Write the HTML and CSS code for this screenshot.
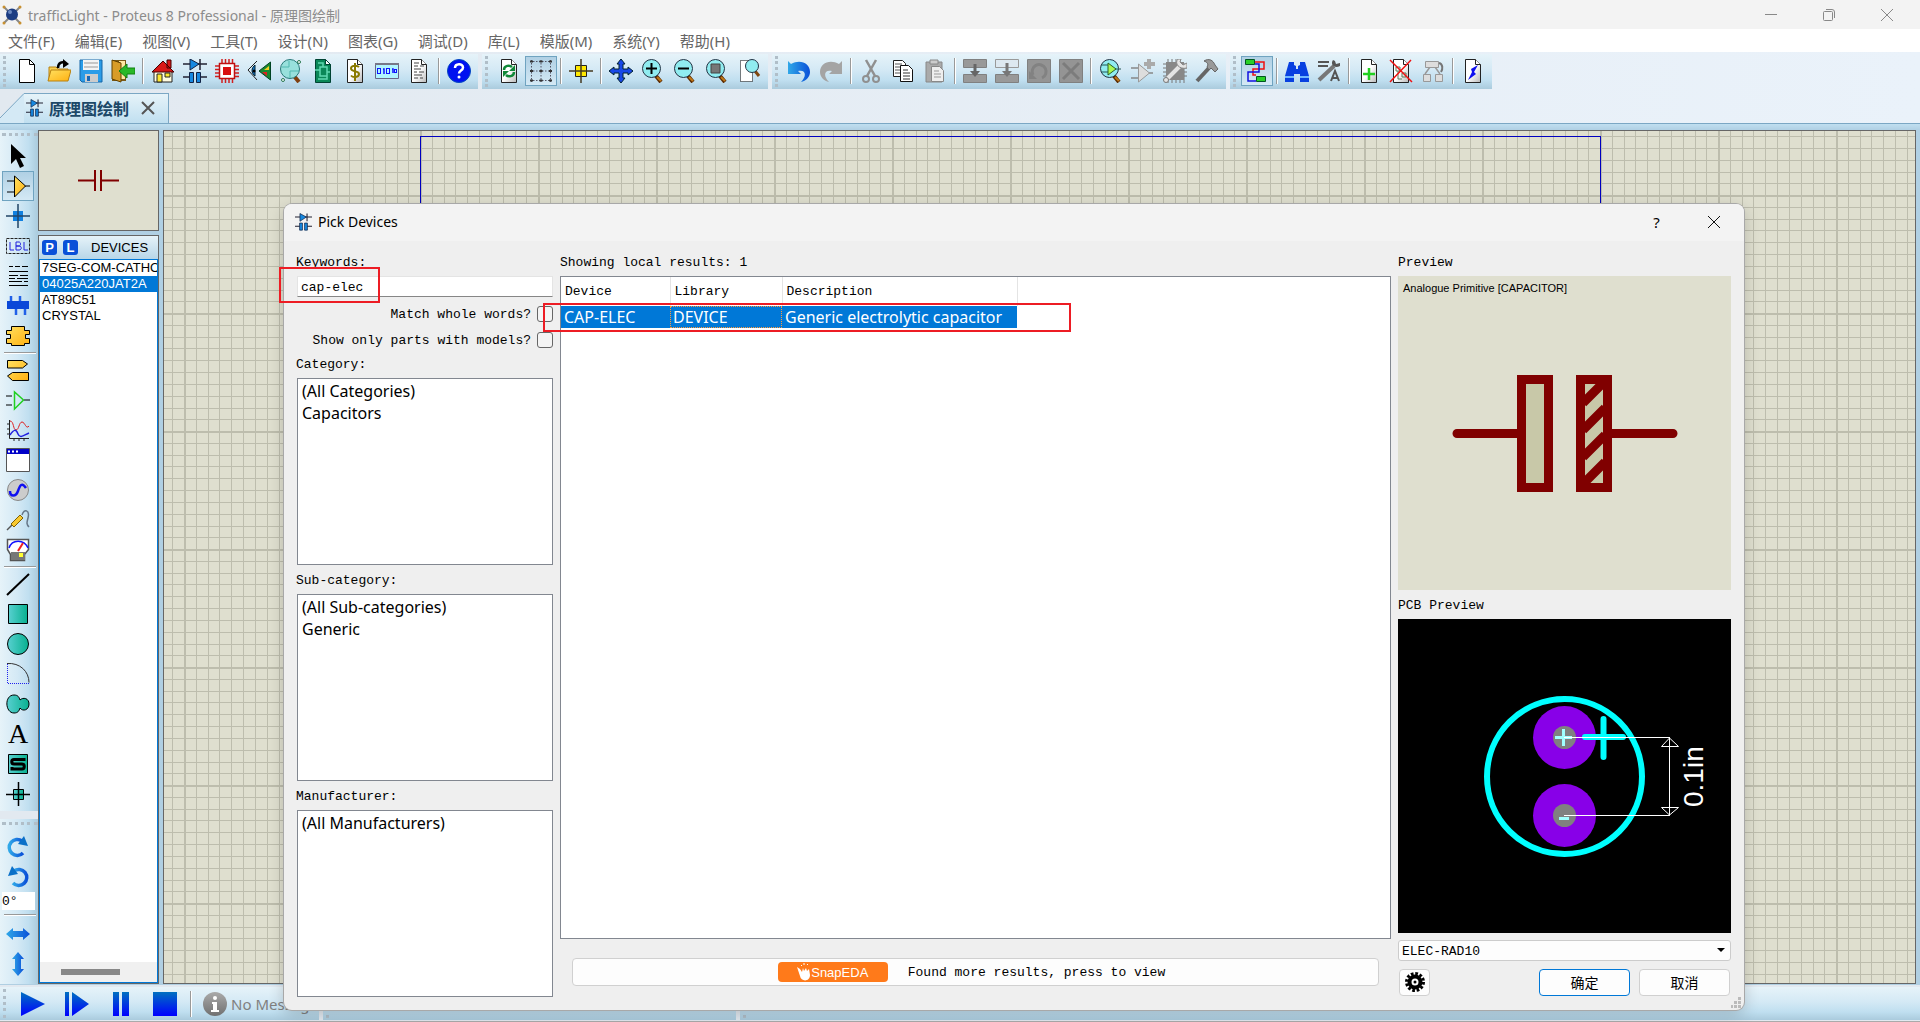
FILE: index.html
```html
<!DOCTYPE html>
<html lang="zh-CN">

<head>
    <meta charset="UTF-8">
    <meta name="viewport" content="width=device-width, initial-scale=1.0">
    <title>trafficLight - Proteus 8 Professional - 原理图绘制</title>
    <link rel="stylesheet" href="styles.css">
</head>

<body>

    <!-- Shared gradients and symbols -->
    <svg class="defs" width="0" height="0" aria-hidden="true">
        <defs>
            <linearGradient id="gPage" x1="0" y1="0" x2="1" y2="1"><stop offset="0.5" stop-color="#fff"/><stop offset="1" stop-color="#b8b8b8"/></linearGradient>
            <linearGradient id="gBlue" x1="0" y1="0" x2="0" y2="1"><stop offset="0" stop-color="#0070c0"/><stop offset="1" stop-color="#0000ff"/></linearGradient>
            <linearGradient id="gArrow" x1="0" y1="0" x2="1" y2="0"><stop offset="0" stop-color="#30a8e8"/><stop offset="1" stop-color="#0a50d8"/></linearGradient>
            <linearGradient id="gTeal" x1="0" y1="0" x2="1" y2="0"><stop offset="0" stop-color="#58d0d0"/><stop offset="1" stop-color="#08b090"/></linearGradient>
            <linearGradient id="gGold" x1="0" y1="0" x2="1" y2="1"><stop offset="0" stop-color="#ffe060"/><stop offset="1" stop-color="#ffb010"/></linearGradient>
            <linearGradient id="gGray" x1="0" y1="0" x2="0" y2="1"><stop offset="0" stop-color="#aaa"/><stop offset="1" stop-color="#707070"/></linearGradient>
            <symbol id="page" viewBox="0 0 24 24"><path d="M4.500.5h10l5 5v18h-15z" fill="url(#gPage)" stroke="#222"/><path d="M14.500.5v5h5" fill="#fff" stroke="#222"/></symbol>
            <symbol id="lens" viewBox="0 0 24 24"><path d="M15 17l5 6" stroke="#5a2a00" stroke-width="4"/><path d="M16 18l4 4" stroke="#c07818" stroke-width="2"/><circle cx="10.500" cy="9.500" r="9" fill="#90ecf0" stroke="#234"/></symbol>
            <symbol id="schematic" viewBox="0 0 24 24"><path d="M0 5h24M17 0v11" stroke="#223" stroke-width="1.500"/><path d="M7 0v11l9-6z" fill="#1688e0" stroke="#124"/><path d="M0 18h7M16 18h8" stroke="#223" stroke-width="1.500"/><path d="M6.500 13.500h4v10h-4zM13.500 13.500h4v10h-4z" fill="#1688e0" stroke="#124"/></symbol>
        </defs>
    </svg>

    <header class="titlebar">
        <svg class="app-logo" viewBox="0 0 20 20"><path d="M2 2l16 16M18 2L2 18" stroke="#888" stroke-width="2"/><circle cx="10" cy="9.500" r="6" fill="#1b3c82"/><circle cx="8" cy="7" r="2" fill="#6a88c0"/><circle cx="2" cy="2" r="1.500" fill="#c89030"/><circle cx="18" cy="2" r="1.500" fill="#c89030"/><circle cx="2" cy="18" r="1.500" fill="#c89030"/><circle cx="18" cy="18" r="1.500" fill="#c89030"/></svg>
        <span class="app-title">trafficLight - Proteus 8 Professional - 原理图绘制</span>
        <div class="window-buttons">
            <button aria-label="Minimize"><svg viewBox="0 0 12 12"><path d="M0 5.500h12"/></svg></button>
            <button aria-label="Restore"><svg viewBox="0 0 12 12"><rect x=".5" y="2.500" width="9" height="9" rx="1"/><path d="M3 .5h6a2.500 2.500 0 0 1 2.500 2.500v6"/></svg></button>
            <button aria-label="Close"><svg viewBox="0 0 12 12"><path d="M0 0l12 12M12 0L0 12"/></svg></button>
        </div>
    </header>

    <nav class="menubar">
        <button>文件(F)</button>
        <button>编辑(E)</button>
        <button>视图(V)</button>
        <button>工具(T)</button>
        <button>设计(N)</button>
        <button>图表(G)</button>
        <button>调试(D)</button>
        <button>库(L)</button>
        <button>模版(M)</button>
        <button>系统(Y)</button>
        <button>帮助(H)</button>
    </nav>

    <div class="toolbars">
        <div class="toolbar">
            <button title="New"><svg viewBox="0 0 24 24"><path d="M4.500.5h10l5 5v18h-15z" fill="#fff" stroke="#000"/><path d="M14.500.5v5h5" fill="none" stroke="#000"/></svg></button>
            <button title="Open"><svg viewBox="0 0 24 24"><path d="M2 22V8h7l2 2h10v3" fill="#f8d050" stroke="#b88010"/><path d="M1 22l3-11h20l-3 11z" fill="url(#gGold)" stroke="#b88010"/><path d="M11 9c0-5 4-7 7-5" fill="none" stroke="#000" stroke-width="2.500"/><path d="M16 0l6 5-6 4z"/></svg></button>
            <button title="Save"><svg viewBox="0 0 24 24"><path d="M1 1h22v22H3l-2-2z" fill="#2a9ce8" stroke="#1566a8"/><path d="M4 1h16v10H4z" fill="#f4f4f4"/><path d="M5 4h14M5 8h14" stroke="#999"/><path d="M6 15h13v8H6z" fill="#ccc"/><path d="M8 17h3v5H8z" fill="#1668b8"/></svg></button>
            <button title="Exit"><svg viewBox="0 0 24 24"><path d="M1 1h14v21H1z" fill="#7a5a18"/><path d="M8 2h6v18H8z" fill="#ffe8a0"/><path d="M1 1l9 3v19l-9-3z" fill="#d89c28" stroke="#604000"/><path d="M8 12l8-7v4h8v6h-8v4z" fill="#28b828" stroke="#108010"/></svg></button>
            <span class="sep"></span>
            <button title="Home"><svg viewBox="0 0 24 24"><path d="M3 12h18v11H3z" fill="#fffbe0" stroke="#222"/><path d="M16 1h4v8h-4zM1 13L12 2l11 11z" fill="#d81818" stroke="#400"/><path d="M6 15h5v8H6z" fill="#ffe830" stroke="#222"/><path d="M14 14h5v4h-5z" fill="#ffe830" stroke="#222"/></svg></button>
            <button title="Schematic Capture"><svg><use href="#schematic"/></svg></button>
            <button title="PCB Layout"><svg viewBox="0 0 24 24"><path d="M7 0v24M10.500 0v24M14 0v24M17.500 0v24M0 7h24M0 10.500h24M0 14h24M0 17.500h24" stroke="#d02020" stroke-width="1.500"/><path d="M4.500 4.500h15v15h-15z" fill="#fff" stroke="#c01010" stroke-width="1.500"/><path d="M8 8h8v8H8z" fill="#d81010"/></svg></button>
            <button title="3D Visualizer"><svg viewBox="0 0 24 24"><path d="M10 2L1 11l9 10" fill="none" stroke="#222"/><path d="M8 6c-4 3-4 8 0 11z" fill="#1878c8" stroke="#023"/><circle cx="7" cy="12" r="1.500"/><path d="M23.500 3v18L12 12z" fill="#188830" stroke="#042"/><path d="M22 7v4h-5z" fill="#f0d020"/><path d="M15 13l5 4v-4z" fill="#e02020"/></svg></button>
            <button title="Gerber Viewer"><svg viewBox="0 0 24 24"><path d="M15 17l5 6" stroke="#804010" stroke-width="4"/><circle cx="11" cy="10" r="9.500" fill="#98e0dc" stroke="#287878"/><path d="M3 8h7V2M11 19v-7h9" fill="none" stroke="#50b8b0"/><circle cx="20" cy="3" r="1.500" fill="#fff" stroke="#287850"/><circle cx="4" cy="21" r="1.500" fill="#fff" stroke="#287850"/></svg></button>
            <button title="Design Explorer"><svg viewBox="0 0 24 24"><path d="M4.500.5h10l5 5v18h-15z" fill="#0a8858" stroke="#043"/><path d="M14.500.5v5h5z" fill="#fff" stroke="#043"/><path d="M9 8h7v9H9zM7 4h5v4M7 20h9v-3M4 11h5M16 13h3" fill="none" stroke="#60d8b0" stroke-width="1.500"/></svg></button>
            <button title="Bill of Materials"><svg viewBox="0 0 24 24"><use href="#page"/><path d="M16 8c-2-2-8-2-8 1.500s8 2 8 5.500-6 4-8 1.500M12 4v18" fill="none" stroke="#8a7a00" stroke-width="2"/></svg></button>
            <button title="Source Code"><svg viewBox="0 0 24 24"><path d="M.5 4.500h23v15H.5z" fill="#b0f4ff" stroke="#668"/><path d="M0 5h24" stroke="#778" stroke-width="2"/><rect x="2.500" y="9.500" width="3" height="5" fill="none" stroke="#11f"/><path d="M8 10h1v5M17 10h1v4" fill="none" stroke="#11f" stroke-width="1.500"/><rect x="11.500" y="9.500" width="3" height="5" fill="none" stroke="#11f"/><rect x="19.500" y="10.500" width="2" height="3" fill="none" stroke="#11f"/></svg></button>
            <button title="Project Notes"><svg viewBox="0 0 24 24"><use href="#page"/><path d="M7 4h5M7 7h4M13 7h4M7 10h7M7 13h3M12 13h5M7 16h8M7 19h4M13 19h3" stroke="#444"/></svg></button>
            <span class="sep"></span>
            <button title="Help"><svg viewBox="0 0 24 24"><circle cx="12" cy="12" r="11.500" fill="#0010f0" stroke="#0048c0"/><path d="M8 9c0-5 8-5 8-.5 0 3-4 3-4 6" fill="none" stroke="#fff" stroke-width="2.500"/><circle cx="12" cy="18" r="1.500" fill="#fff"/></svg></button>
        </div>

        <div class="toolbar">
            <button title="Redraw"><svg viewBox="0 0 24 24"><use href="#page"/><path d="M7 11c0-5 6-5 8-3M17 13c0 5-6 5-8 3" fill="none" stroke="#108838" stroke-width="2.500"/><path d="M18 6v6h-6zM6 18v-6h6z" fill="#108838"/></svg></button>
            <button title="Toggle Grid" class="checked"><svg viewBox="0 0 24 24"><path d="M2.500 1v22M12 1v22M21.500 1v22M1 2.500h22M1 12h22M1 21.500h22" stroke="#556" stroke-dasharray="1.500 1.500"/><path d="M1 2.500h3M10.500 2.500h3M20 2.500h3M1 12h3M10.500 12h3M20 12h3M1 21.500h3M10.500 21.500h3M20 21.500h3" stroke="#333" stroke-width="2"/></svg></button>
            <span class="sep"></span>
            <button title="Origin"><svg viewBox="0 0 24 24"><path d="M6.500 6.500h11v11h-11z" fill="#ffe800" stroke="#222"/><path d="M12 0v24M0 12h24" stroke="#443a20" stroke-width="1.500"/></svg></button>
            <span class="sep"></span>
            <button title="Pan"><svg viewBox="0 0 24 24"><path d="M12 0l4 5h-2v5h5V8l5 4-5 4v-2h-5v5h2l-4 5-4-5h2v-5H5v2l-5-4 5-4v2h5V5H8z" fill="#1848e8" stroke="#023"/></svg></button>
            <button title="Zoom In"><svg viewBox="0 0 24 24"><use href="#lens"/><path d="M5 9.500h11M10.500 4v11" stroke="#000" stroke-width="2"/></svg></button>
            <button title="Zoom Out"><svg viewBox="0 0 24 24"><use href="#lens"/><path d="M5 9.500h11" stroke="#000" stroke-width="2"/></svg></button>
            <button title="Zoom All"><svg viewBox="0 0 24 24"><use href="#lens"/><path d="M6 5h9v9H6z" fill="#777" stroke="#444"/></svg></button>
            <button title="Zoom Area"><svg viewBox="0 0 24 24"><path d="M3.500 1.500h12v21h-12z" fill="#fff" stroke="#000" stroke-dasharray="1 1"/><path d="M18 12l4 5" stroke="#804810" stroke-width="3"/><circle cx="15" cy="7" r="6.500" fill="#90ecf0" stroke="#234"/></svg></button>
        </div>

        <div class="toolbar">
            <button title="Undo"><svg viewBox="0 0 24 24"><path d="M1 2l3 3c9-5 19-1 19 8 0 5-4 9-9 10 6-6 5-13-3-11l3 3H1z" fill="url(#gArrow)"/></svg></button>
            <button title="Redo"><svg viewBox="0 0 24 24"><path d="M23 2l-3 3C11 0 1 4 1 13c0 5 4 9 9 10-6-6-5-13 3-11l-3 3h13z" fill="#a4a4a4"/></svg></button>
            <span class="sep"></span>
            <button title="Cut"><svg viewBox="0 0 24 24"><path d="M7 1l9 16M17 1L8 17" stroke="#909090" stroke-width="2.500"/><circle cx="7" cy="20" r="3" fill="none" stroke="#909090" stroke-width="2"/><circle cx="17" cy="20" r="3" fill="none" stroke="#909090" stroke-width="2"/></svg></button>
            <button title="Copy"><svg viewBox="0 0 24 24"><path d="M2.500 1.500h9l3 3v13h-12z" fill="#fff" stroke="#222"/><path d="M4 5h7M4 8h7M4 11h7M4 14h7" stroke="#555"/><path d="M9.500 6.500h8l4 4v12h-12z" fill="#fff" stroke="#111"/><path d="M12 11h5M12 14h7M12 17h7M12 20h7" stroke="#333"/></svg></button>
            <button title="Paste"><svg viewBox="0 0 24 24"><path d="M3 3h16v20H3z" fill="#aaa" stroke="#888"/><path d="M7 1h8v4H7z" fill="#ccc" stroke="#888"/><path d="M8.500 7.500h8l4 4v11h-12z" fill="#eee" stroke="#888"/><path d="M11 12h5M11 15h7M11 18h7" stroke="#999"/></svg></button>
            <span class="sep"></span>
            <button title="Block Copy"><svg viewBox="0 0 24 24"><path d="M.5.500h23v8H.5zM.5 15.500h23v8H.5z" fill="#999" stroke="#808080"/><path d="M12 5v9" stroke="#666" stroke-width="3"/><path d="M7 12h10l-5 6z" fill="#666"/></svg></button>
            <button title="Block Move"><svg viewBox="0 0 24 24"><path d="M.5.500h23v8H.5z" fill="#dde8f0" stroke="#999"/><path d="M.5 15.500h23v8H.5z" fill="#999" stroke="#808080"/><path d="M12 4v10" stroke="#777" stroke-width="3"/><path d="M7 12h10l-5 6z" fill="#777"/></svg></button>
            <button title="Block Rotate"><svg viewBox="0 0 24 24"><path d="M.5.500h23v23H.5z" fill="#949494" stroke="#808080"/><path d="M6 16a7 7 0 1 1 9 3" fill="none" stroke="#828282" stroke-width="3"/><path d="M2 12v8h8z" fill="#828282"/></svg></button>
            <button title="Block Delete"><svg viewBox="0 0 24 24"><path d="M.5.500h23v23H.5z" fill="#949494" stroke="#808080"/><path d="M4 4l16 16M20 4L4 20" stroke="#7c7c7c" stroke-width="3"/></svg></button>
            <span class="sep"></span>
            <button title="Pick Parts"><svg viewBox="0 0 24 24"><use href="#lens"/><path d="M2 6h7M2 13h7M16 10h6" stroke="#255"/><path d="M9 4v12l8-6z" fill="#a8f850" stroke="#286028"/></svg></button>
            <button title="Make Device"><svg viewBox="0 0 24 24"><path d="M0 9h8M0 19h8M17 14h5" stroke="#888" stroke-width="1.500"/><path d="M7.500 5v18l11-9z" fill="#ddd" stroke="#999"/><path d="M18 0v10M13 5h11" stroke="#aaa" stroke-width="4"/></svg></button>
            <button title="Packaging Tool"><svg viewBox="0 0 24 24"><path d="M5 0v24M9 0v24M13 0v24M17 0v24M21 8v16M0 5h24M0 9h24M0 13h24M0 17h24" stroke="#777"/><path d="M3 3h18v18H3z" fill="#888"/><path d="M3 21L17 7" stroke="#e4e4e4" stroke-width="4"/><circle cx="3" cy="21" r="2.500" fill="#e4e4e4" stroke="#777"/><path d="M15 0c-4 4 1 11 9 9V4l-4 2-3-3 1-3z" fill="#e4e4e4" stroke="#888"/></svg></button>
            <button title="Decompose"><svg viewBox="0 0 24 24"><path d="M2 22L14 9" stroke="#666" stroke-width="4"/><path d="M9 2c5-3 9-1 11 4l3 4-3 3-4-4-2 2-2-3c2-3 0-5-3-6z" fill="#999" stroke="#666"/></svg></button>
        </div>

        <div class="toolbar">
            <button title="Wire Autorouter" class="checked"><svg viewBox="0 0 24 24"><path d="M10 3h9v7H8v6h3" fill="none" stroke="#f01010" stroke-width="1.500"/><path d="M10 5h4v8H3v9h8" fill="none" stroke="#1010e0" stroke-width="1.500"/><path d="M.5.500h9v5H.5zM11.500 17.500h9v5h-9z" fill="#28d028" stroke="#052"/></svg></button>
            <span class="sep"></span>
            <button title="Search"><svg viewBox="0 0 24 24"><path d="M4 3h5v3l2 1v3h2V7l2-1V3h5l4 14v6h-9v-8h-6v8H0v-6z" fill="#0840e0"/><path d="M0 18h9M15 18h9" stroke="#70b8ff" stroke-width="2"/></svg></button>
            <button title="Property Assignment"><svg viewBox="0 0 24 24"><path d="M1 3h11M1 7h10" stroke="#555" stroke-width="2"/><path d="M2 21L17 7" stroke="#777" stroke-width="4"/><path d="M16 1c-3 4 1 9 7 6V4l-4 1-1-3z" fill="#555"/><path d="M14 22l4-10 4 10M15 19h6" fill="none" stroke="#555" stroke-width="2"/></svg></button>
            <span class="sep"></span>
            <button title="New Sheet"><svg viewBox="0 0 24 24"><use href="#page"/><path d="M6 15h12M12 9v12" stroke="#20d020" stroke-width="2.500"/></svg></button>
            <button title="Remove Sheet"><svg viewBox="0 0 24 24"><use href="#page"/><path d="M7 8h4v4H7zM13 14h4v4h-4zM9 12v8h4" fill="none" stroke="#5a7a5a"/><path d="M1 1l22 22M22 1L1 23" stroke="#f01010" stroke-width="1.500"/></svg></button>
            <button title="Exit to Parent"><svg viewBox="0 0 24 24"><path d="M9 8l-5 7M14 8l5 7" stroke="#999" stroke-width="1.500"/><path d="M4.500 2.500h13v6h-13zM2.500 15.500h7v7h-7zM14.500 15.500h7v7h-7z" fill="#ddd" stroke="#999"/><path d="M18 4c4 1 4 6 2 9" fill="none" stroke="#777" stroke-width="2"/></svg></button>
            <span class="sep"></span>
            <button title="Electrical Rules Check"><svg viewBox="0 0 24 24"><use href="#page"/><path d="M17 6l-7 4 1 3-4 8 8-6-2-2z" fill="#1010f0"/></svg></button>
        </div>
    </div>

    <div class="tabbar">
        <svg class="tab-slope" viewBox="0 0 24 30" aria-hidden="true"><path d="M0 26L24 0v30H0z" fill="#d4e9f5"/><path d="M0 25L24 .5" stroke="#7ba7c4" fill="none"/></svg>
        <div class="tab">
            <svg class="small-icon"><use href="#schematic"/></svg>
            <span>原理图绘制</span>
            <button aria-label="Close tab"><svg viewBox="0 0 14 14"><path d="M1 1l12 12M13 1L1 13" stroke="#555" stroke-width="2"/></svg></button>
        </div>
    </div>

    <main class="workspace">
        <aside class="palettes">
            <div class="palette">
                <button title="Selection"><svg viewBox="0 0 24 24"><path d="M5 0v20l5-5 4 9 4-2-4-8h6z"/></svg></button>
                <button title="Component" class="checked"><svg viewBox="0 0 24 24"><path d="M1 7h8M1 18h8M18 12h6" stroke="#000"/><path d="M8.500 2v21l11-11z" fill="url(#gGold)" stroke="#000"/></svg></button>
                <button title="Junction"><svg viewBox="0 0 24 24"><path d="M7 7h10v10H7z" fill="#1080e0"/><path d="M12 0v24M0 12h24" stroke="#246" stroke-width="1.500"/></svg></button>
                <button title="Wire Label"><svg viewBox="0 0 24 24"><path d="M.5 4.500h23v15H.5z" fill="none" stroke="#222" stroke-dasharray="3 1"/><path d="M4 8v8h4M10 8v8h3c3 0 3-4 0-4h-3 3c2 0 2-4 0-4zM18 8v8h4" fill="none" stroke="#22d"/></svg></button>
                <button title="Text Script"><svg viewBox="0 0 24 24"><path d="M3 2.500h4M9 2.500h5M16 2.500h6M3 7.500h19M3 11.500h9M14 11.500h8M3 14.500h6M11 14.500h11M3 17.500h13M18 17.500h4M3 21.500h19" stroke="#000"/></svg></button>
                <button title="Buses"><svg viewBox="0 0 24 24"><path d="M5 2v8M14 2v8M10 14v7M19 14v7" stroke="#2060e8" stroke-width="2.500"/><path d="M1 7h22v8H1z" fill="#0a48d8"/></svg></button>
                <button title="Subcircuit"><svg viewBox="0 0 24 24"><path d="M5.500 2.500h13v4h5v4h-4v4h4v5h-5v2h-13v-2h-5v-5h4v-4h-4v-4h5z" fill="url(#gGold)" stroke="#000"/></svg></button>
                <span class="line"></span>
                <button title="Terminals"><svg viewBox="0 0 24 24"><path d="M1.500 2.500h15l5 3.500-5 4h-15zM22.500 14.500h-16L1.500 18l5 4.500h16z" fill="url(#gGold)" stroke="#000"/></svg></button>
                <button title="Device Pins"><svg viewBox="0 0 24 24"><path d="M0 8h6M0 17h6M18 12h6" stroke="#000"/><path d="M8.500 4v17l9-9z" fill="none" stroke="#20d020" stroke-width="1.500"/></svg></button>
                <button title="Graph"><svg viewBox="0 0 24 24"><path d="M3.500 2v18.500H23M1 6h3M1 11h3M1 16h3M8 20v3M13 20v3M18 20v3" fill="none" stroke="#222"/><path d="M4 3c4 0 3 9 6 9s3-8 6-8 4 8 7 4" fill="none" stroke="#e02020"/><path d="M4 17c4-6 6-6 8-1s6 1 11-1" fill="none" stroke="#2020e0" stroke-width="1.500"/></svg></button>
                <button title="Active Popup"><svg viewBox="0 0 24 24"><path d="M.5.500h23v23H.5z" fill="#fff" stroke="#555"/><path d="M1 1h22v5H1z" fill="#0000c8"/><path d="M2 3.500h2M6 3.500h2M10 3.500h2" stroke="#fff" stroke-width="2"/></svg></button>
                <button title="Generator"><svg viewBox="0 0 24 24"><circle cx="12" cy="12" r="10.500" fill="#ccc" stroke="#888"/><path d="M4 13c0 6 6 6 8 0s4-9 8-3" fill="none" stroke="#1010f0" stroke-width="2.500"/></svg></button>
                <button title="Probe"><svg viewBox="0 0 24 24"><path d="M1 22l6-6" stroke="#555" stroke-width="1.500"/><path d="M5 16L14 7l3 3-9 9z" fill="#f8c830" stroke="#806000"/><path d="M16 7c2-7 8-5 6 3-1 4-2 6 1 9" fill="none" stroke="#678" stroke-width="1.500"/></svg></button>
                <button title="Instruments"><svg viewBox="0 0 24 24"><path d="M1.500 1.500h21v10l-4 5v6h-14v-6l-3-5z" fill="#fff" stroke="#555" stroke-width="1.500"/><path d="M3 10c3-9 15-9 19 0" fill="none" stroke="#11f" stroke-width="1.500"/><path d="M12 13l5-8" stroke="#f02020" stroke-width="2"/><path d="M5 14h14v8H5z" fill="#777"/><path d="M13 15h4v4h-4z" fill="#ff3"/></svg></button>
                <span class="line"></span>
                <button title="2D Line"><svg viewBox="0 0 24 24"><path d="M1 23L23 2" stroke="#000" stroke-width="2"/></svg></button>
                <button title="2D Box"><svg viewBox="0 0 24 24"><path d="M2.500 2.500h19v19h-19z" fill="url(#gTeal)" stroke="#000"/></svg></button>
                <button title="2D Circle"><svg viewBox="0 0 24 24"><circle cx="12" cy="12" r="10.500" fill="url(#gTeal)" stroke="#000"/></svg></button>
                <button title="2D Arc"><svg viewBox="0 0 24 24"><path d="M1.500 2v19.500H23" fill="none" stroke="#22e" stroke-dasharray="1 1"/><path d="M1 1.500c13-1 22 8 22 19" fill="none" stroke="#333"/></svg></button>
                <button title="2D Path"><svg viewBox="0 0 24 24"><path d="M8 3c4 0 5 2 6 5 3-3 9-2 9 4s-6 8-9 4c-1 3-2 5-6 5-9 0-10-18 0-18z" fill="url(#gTeal)" stroke="#000"/></svg></button>
                <button title="2D Text"><span class="letter">A</span></button>
                <button title="2D Symbol"><svg viewBox="0 0 24 24"><path d="M2.500 2.500h19v19h-19z" fill="url(#gTeal)" stroke="#000"/><path d="M18 9V7.500H8c-3 0-3 4.500 0 4.500h8c3 0 3 5 0 5H6V15" fill="none" stroke="#000" stroke-width="3"/></svg></button>
                <button title="2D Marker"><svg viewBox="0 0 24 24"><path d="M7.500 7.500h10v10h-10z" fill="url(#gTeal)" stroke="#000"/><path d="M12.500 0v24M0 12.500h24" stroke="#000" stroke-width="1.500"/></svg></button>
            </div>
            <div class="palette">
                <button title="Rotate Clockwise"><svg viewBox="0 0 24 24"><path d="M16 6A8 8 0 1 0 17 18" fill="none" stroke="url(#gArrow)" stroke-width="3.500"/><path d="M18 1l4 10-10-2z" fill="#0a70c8"/></svg></button>
                <button title="Rotate Anti-clockwise"><svg viewBox="0 0 24 24"><path d="M8 6A8 8 0 1 1 7 18" fill="none" stroke="url(#gArrow)" stroke-width="3.500"/><path d="M6 1L2 11l10-2z" fill="#0a70c8"/></svg></button>
                <input type="text" value="0°" aria-label="Rotation angle">
                <span class="line"></span>
                <button title="X-mirror"><svg viewBox="0 0 24 24"><path d="M0 12l7-6v3h10V6l7 6-7 6v-3H7v3z" fill="url(#gArrow)"/></svg></button>
                <button title="Y-mirror"><svg viewBox="0 0 24 24"><path d="M12 0l6 7h-3v10h3l-6 7-6-7h3V7H6z" fill="url(#gArrow)"/></svg></button>
            </div>
        </aside>

        <aside class="device-panel">
            <div class="overview">
                <svg viewBox="0 0 42 22"><path d="M0 10.500h17M24 10.500h17M17 0v21M23 0v21" stroke="#800000" stroke-width="2"/></svg>
            </div>
            <section class="devices">
                <div class="devices-head">
                    <button>P</button>
                    <button>L</button>
                    <span>DEVICES</span>
                </div>
                <ul class="devices-list">
                    <li>7SEG-COM-CATHODE</li>
                    <li class="selected">04025A220JAT2A</li>
                    <li>AT89C51</li>
                    <li>CRYSTAL</li>
                </ul>
                <div class="hscroll"><span></span></div>
            </section>
        </aside>

        <section class="canvas" aria-label="Schematic">
            <svg class="grid" width="100%" height="100%">
                <defs>
                    <pattern id="grid" x="20" y="64" width="118" height="118" patternUnits="userSpaceOnUse">
                        <path d="M12.500 0v118M24.500 0v118M35.500 0v118M47.500 0v118M59.500 0v118M71.500 0v118M83.500 0v118M95.500 0v118M106.500 0v118M0 12.500h118M0 24.500h118M0 35.500h118M0 47.500h118M0 59.500h118M0 71.500h118M0 83.500h118M0 95.500h118M0 106.500h118" stroke="#bdbdad"/>
                        <path d="M0 0h2v118H0zM0 0h118v2H0z" fill="#bdbdad"/>
                    </pattern>
                </defs>
                <rect width="100%" height="100%" fill="url(#grid)"/>
                <rect x="256.500" y="5.500" width="1180" height="826" fill="none" stroke="#0000c0"/>
            </svg>
        </section>
    </main>

    <footer class="statusbar">
        <div class="status-group controls">
            <button title="Run"><svg viewBox="0 0 24 24"><path d="M0 0l24 12L0 24z" fill="url(#gBlue)"/></svg></button>
            <button title="Step"><svg viewBox="0 0 24 24"><path d="M0 0h4v24H0zM7 0l17 12L7 24z" fill="url(#gBlue)"/></svg></button>
            <button title="Pause"><svg viewBox="0 0 24 24"><path d="M4 0h6v24H4zM13 0h7v24h-7z" fill="url(#gBlue)"/></svg></button>
            <button title="Stop"><svg viewBox="0 0 24 24"><path d="M0 0h24v24H0z" fill="url(#gBlue)"/></svg></button>
            <span class="sep"></span>
            <svg class="info" viewBox="0 0 24 24"><circle cx="12" cy="12" r="12" fill="url(#gGray)"/><circle cx="12" cy="6" r="2" fill="#fff"/><path d="M9 10h5v8h2v2H8v-2h2v-6H9z" fill="#fff"/></svg>
            <span>No Messages</span>
        </div>
        <div class="status-group sheet"></div>
        <div class="status-group rest"></div>
    </footer>

    <!-- Pick Devices window -->
    <div class="dialog" role="dialog" aria-labelledby="dialogTitle">
        <div class="dialog-title">
            <svg class="small-icon"><use href="#schematic"/></svg>
            <h1 id="dialogTitle">Pick Devices</h1>
            <button aria-label="Help">?</button>
            <button aria-label="Close"><svg viewBox="0 0 12 12"><path d="M0 0l12 12M12 0L0 12"/></svg></button>
        </div>

        <div class="dialog-body">
            <div class="filters">
                <label class="caption" for="keywords">Keywords:</label>
                <input class="keywords" type="text" id="keywords" value="cap-elec">
                <div class="check-row">
                    <label for="wholeWords">Match whole words?</label>
                    <input type="checkbox" id="wholeWords">
                </div>
                <div class="check-row">
                    <label for="withModels">Show only parts with models?</label>
                    <input type="checkbox" id="withModels">
                </div>
                <h2 class="caption category">Category:</h2>
                <ul class="listbox">
                    <li>(All Categories)</li>
                    <li>Capacitors</li>
                </ul>
                <h2 class="caption">Sub-category:</h2>
                <ul class="listbox">
                    <li>(All Sub-categories)</li>
                    <li>Generic</li>
                </ul>
                <h2 class="caption">Manufacturer:</h2>
                <ul class="listbox">
                    <li>(All Manufacturers)</li>
                </ul>
                <span class="mark mark-keywords"></span>
            </div>

            <div class="results">
                <h2 class="caption">Showing local results: 1</h2>
                <div class="results-box">
                    <table>
                        <thead>
                            <tr>
                                <th class="col-device">Device</th>
                                <th class="col-library">Library</th>
                                <th class="col-description">Description</th>
                            </tr>
                        </thead>
                        <tbody>
                            <tr>
                                <td>CAP-ELEC</td>
                                <td class="focused">DEVICE</td>
                                <td>Generic electrolytic capacitor</td>
                            </tr>
                        </tbody>
                    </table>
                </div>
                <button class="snapeda">
                    <span class="snapeda-logo">
                        <svg viewBox="0 0 14 18"><path d="M0 4l3 2 2 3 1-4 1 3 2-3 1 3 2-2 1 6c0 7-9 7-10 1z" fill="#fff"/><path d="M4 2l1 1M7 0v2M10 2l1-1" stroke="#fff"/></svg>
                        SnapEDA
                    </span>
                    Found more results, press to view
                </button>
                <span class="mark mark-result"></span>
            </div>

            <div class="previews">
                <h2 class="caption">Preview</h2>
                <div class="preview">
                    <span>Analogue Primitive [CAPACITOR]</span>
                    <svg viewBox="0 0 333 314">
                        <g stroke="#800000" stroke-width="9">
                            <path d="M59 157.500h64M210 157.500h65" stroke-linecap="round"/>
                            <rect x="123.500" y="103.500" width="27" height="108" fill="#c8c8a8"/>
                            <rect x="182.500" y="103.500" width="27" height="108" fill="#c8c8a8"/>
                            <path d="M185 127l22-22M185 154l22-22M185 181l22-22M185 208l22-22" fill="none"/>
                        </g>
                    </svg>
                </div>
                <h2 class="caption">PCB Preview</h2>
                <div class="preview pcb">
                    <svg viewBox="0 0 333 314">
                        <circle cx="166.500" cy="157.500" r="77.500" fill="none" stroke="#0ff" stroke-width="6"/>
                        <circle cx="166.500" cy="118.500" r="31.500" fill="#8800e8"/>
                        <circle cx="166.500" cy="196.500" r="31.500" fill="#8800e8"/>
                        <circle cx="166.500" cy="118.500" r="11.500" fill="#808080"/>
                        <circle cx="166.500" cy="196.500" r="11.500" fill="#808080"/>
                        <path d="M187 118h38M205.500 100v38" stroke="#0ff" stroke-width="6" stroke-linecap="round"/>
                        <path d="M157 118.500h17M165.500 110v17M161 199.500h10" stroke="#a0ffff" stroke-width="3"/>
                        <path d="M166 118.500h106M166 196.500h106M271.500 118v79M271.500 119l-8 8.500h17zM271.500 196l-8-7.500h17z" fill="none" stroke="#fff"/>
                        <text transform="translate(305 188) rotate(-90)">0.1in</text>
                    </svg>
                </div>
                <div class="package">
                    <select aria-label="Package">
                        <option>ELEC-RAD10</option>
                    </select>
                </div>
                <div class="actions">
                    <button class="gear" aria-label="Settings"><svg viewBox="0 0 20 20"><circle cx="10" cy="10" r="8.500" fill="none" stroke="#000" stroke-width="3" stroke-dasharray="2.700 1.750"/><circle cx="10" cy="10" r="5.500" fill="none" stroke="#000" stroke-width="4"/><circle cx="10" cy="10" r="1.500"/></svg></button>
                    <button class="ok">确定</button>
                    <button>取消</button>
                </div>
            </div>
        </div>
        <svg class="resize" viewBox="0 0 10 11" aria-hidden="true"><path d="M7 0h3v3H7zM7 4h3v3H7zM3 4h3v3H3zM7 8h3v3H7zM3 8h3v3H3zM0 8h2v3H0z" fill="#bbb"/></svg>
    </div>

</body>

</html>
```

FILE: styles.css
```css
* {
    box-sizing: border-box;
}

body {
    margin: 0;
    height: 100vh;
    display: flex;
    flex-direction: column;
    position: relative;
    overflow: hidden;
    background: #e2e9f0;
    color: #000;
    font-family: "Noto Sans", "Noto Sans CJK SC", sans-serif;
    font-size: 15px;
}

button,
input,
select {
    margin: 0;
    padding: 0;
    border: 0;
    background: none;
    color: inherit;
    font: inherit;
}

ul {
    margin: 0;
    padding: 0;
    list-style: none;
}

.defs {
    position: absolute;
}

/* Title bar and menu */
.titlebar {
    height: 29px;
    display: flex;
    align-items: center;
    padding-left: 2px;
    background: #f3f3f3;
}

.app-logo {
    width: 20px;
    height: 20px;
}

.app-title {
    margin-left: 6px;
    color: #8c8c8c;
    font-size: 14px;
}

.window-buttons {
    display: flex;
    margin-left: auto;
    padding-right: 4px;
}

.window-buttons button {
    width: 58px;
    height: 28px;
}

.window-buttons svg,
.dialog-title button svg {
    width: 12px;
    height: 12px;
    fill: none;
    stroke: #888;
}

.menubar {
    height: 23px;
    display: flex;
    gap: 20px;
    padding-left: 8px;
    background: #fff;
    color: #666;
    font-size: 15px;
    line-height: 24px;
}

/* Toolbars */
.toolbars {
    display: flex;
    gap: 4px;
    padding-top: 2px;
    background: linear-gradient(to right, #e2e9f0, #eaf2fa);
}

.toolbar {
    height: 35px;
    display: flex;
    align-items: center;
    padding: 0 3px 2px 11px;
    position: relative;
    background: linear-gradient(#e6f3f9, #d4e9f5 45%, #c0dff0 75%, #aacbdd);
}

.toolbar::before,
.status-group::before {
    content: "";
    position: absolute;
    left: 3px;
    top: 2px;
    bottom: 2px;
    border-left: 3px dotted #b0bec8;
}

.toolbar button {
    width: 32px;
    height: 30px;
    display: flex;
    align-items: center;
    justify-content: center;
}

.toolbar svg,
.palette svg {
    width: 24px;
    height: 24px;
    display: block;
}

.toolbar .checked,
.palette .checked {
    border: 1px solid #6fa3c0;
    background: linear-gradient(#b0d0e4, #d4e9f5);
}

.sep {
    width: 2px;
    height: 26px;
    margin: 0 3px;
    border-left: 1px solid #999;
    border-right: 1px solid #fff;
}

/* Tabs */
.tabbar {
    height: 35px;
    display: flex;
    align-items: flex-end;
    border-bottom: 1px solid #7ba7c4;
    background: linear-gradient(to right, #e2e9f0, #eaf2fa);
}

.tab-slope {
    width: 24px;
    height: 30px;
}

.tab {
    height: 30px;
    display: flex;
    align-items: center;
    gap: 6px;
    width: 145px;
    padding: 0 0 2px 2px;
    border-top: 1px solid #7ba7c4;
    border-right: 1px solid #7ba7c4;
    background: linear-gradient(#e6f3f9, #c0dff0);
    color: #1c4868;
    font-weight: bold;
    font-size: 16px;
}

.tab button {
    margin-left: 6px;
}

.tab button svg {
    width: 14px;
    height: 14px;
    display: block;
}

.small-icon {
    width: 17px;
    height: 20px;
}

/* Workspace */
.workspace {
    flex: 1;
    min-height: 0;
    display: flex;
    padding: 6px 4px 1px 0;
    background: linear-gradient(#c0dff0, #b0d0e4 6px, #b0cfe2);
}

.palettes {
    width: 38px;
    display: flex;
    flex-direction: column;
    gap: 8px;
    background: #e2e9f0;
}

.palette {
    display: flex;
    flex-direction: column;
    align-items: flex-start;
    padding: 11px 2px 2px;
    position: relative;
    background: linear-gradient(to right, #e6f3f9, #d4e9f5 45%, #c0dff0 75%, #aacbdd);
}

.palette::before {
    content: "";
    position: absolute;
    left: 2px;
    right: 0;
    top: 3px;
    border-top: 3px dotted #b0bec8;
}

.palette + .palette {
    flex: 1;
    padding-top: 13px;
}

.palette button {
    width: 32px;
    height: 30px;
    display: flex;
    align-items: center;
    justify-content: center;
}

.letter {
    font-family: "Liberation Serif", serif;
    font-size: 28px;
    line-height: 30px;
}

.palette input {
    width: 33px;
    height: 18px;
    background: #fff;
    font-family: "Liberation Mono", monospace;
    font-size: 13px;
}

.line {
    align-self: stretch;
    height: 2px;
    margin: 1px 0 1px 2px;
    border-top: 1px solid #999;
    border-bottom: 1px solid #fff;
}

.palette input + .line {
    margin: 4px 0 3px 2px;
}

.device-panel {
    width: 121px;
    margin-right: 4px;
    display: flex;
    flex-direction: column;
    gap: 4px;
}

.overview {
    height: 101px;
    display: flex;
    align-items: center;
    justify-content: center;
    border: 1px solid #666;
    background: #dfdfcf;
}

.overview svg {
    width: 42px;
    height: 22px;
}

.devices {
    flex: 1;
    min-height: 0;
    display: flex;
    flex-direction: column;
    border: 1px solid #666;
    font-family: "Liberation Sans", sans-serif;
    font-size: 13px;
}

.devices-head {
    height: 23px;
    display: flex;
    align-items: center;
    gap: 6px;
    padding-left: 3px;
    background: linear-gradient(#e6f3f9, #b8d6e8);
}

.devices-head button {
    width: 15px;
    height: 15px;
    border-radius: 3px;
    background: #0a50d8;
    color: #fff;
    font-weight: bold;
    line-height: 15px;
}

.devices-head span {
    margin-left: 7px;
}

.devices-list {
    flex: 1;
    border: 1px solid #0078d7;
    border-bottom: 0;
    background: #fff;
}

.devices-list li {
    height: 16px;
    padding-left: 2px;
    overflow: hidden;
    white-space: nowrap;
    line-height: 16px;
}

.devices-list .selected {
    background: #0078d7;
    color: #fff;
}

.hscroll {
    height: 21px;
    padding: 7px 21px;
    border: 1px solid #0078d7;
    border-top: 0;
    background: #f0f0f0;
}

.hscroll span {
    display: block;
    width: 59px;
    height: 6px;
    background: #888;
}

.canvas {
    flex: 1;
    min-width: 0;
    border: 1px solid #666;
    background: #dfdfcf;
}

.grid {
    display: block;
}

/* Status bar */
.statusbar {
    height: 37px;
    display: flex;
    gap: 4px;
    padding: 2px 0 1px;
    border-bottom: 1px solid #aaa;
}

.status-group {
    position: relative;
    background: linear-gradient(#e6f3f9, #d4e9f5 45%, #c0dff0 75%, #aacbdd);
}

.controls {
    width: 319px;
    display: flex;
    align-items: center;
    padding-left: 11px;
    color: #808080;
}

.controls button {
    width: 44px;
    height: 28px;
    flex-shrink: 0;
}

.controls button svg,
.info {
    width: 24px;
    height: 24px;
    display: block;
    margin: 0 auto;
}

.controls .info {
    flex-shrink: 0;
    margin: 0 4px 0 8px;
}

.controls span {
    flex-shrink: 0;
}

.sheet {
    width: 413px;
}

.rest {
    flex: 1;
}

/* Pick Devices window */
.dialog {
    position: absolute;
    left: 284px;
    right: 176px;
    top: 204px;
    bottom: 12px;
    display: flex;
    flex-direction: column;
    border-radius: 8px;
    background: #efefef;
    box-shadow: 0 0 0 1px #a8a8a8, 0 4px 16px rgba(0, 0, 0, 0.2);
}

.dialog-title {
    height: 37px;
    display: flex;
    align-items: center;
    padding: 0 2px 2px 11px;
    border-radius: 8px 8px 0 0;
    background: #f3f3f3;
}

.dialog-title h1 {
    flex: 1;
    margin: 0 0 0 6px;
    font-size: 14px;
    font-weight: normal;
}

.dialog-title button {
    width: 57px;
    height: 34px;
}

.dialog-title button svg {
    stroke: #111;
}

.dialog-body {
    flex: 1;
    min-height: 0;
    display: flex;
    gap: 7px;
    padding: 6px 13px 13px 12px;
    font-family: "Liberation Mono", "Noto Sans CJK SC", monospace;
    font-size: 13px;
}

.caption {
    display: block;
    height: 29px;
    flex-shrink: 0;
    margin: 0;
    font-size: 13px;
    font-weight: normal;
    line-height: 31px;
}

.filters {
    width: 257px;
    position: relative;
    display: flex;
    flex-direction: column;
}

.filters .keywords {
    height: 21px;
    margin-left: 1px;
    padding: 2px 3px 0;
    border: 1px solid #e4e4e4;
    border-bottom-color: #868686;
    background: #fff;
}

.check-row {
    height: 26px;
    display: flex;
    align-items: center;
    justify-content: flex-end;
    gap: 6px;
}

.keywords + .check-row {
    margin-top: 4px;
}

.check-row input {
    appearance: none;
    width: 16px;
    height: 16px;
    border: 1px solid #666;
    border-radius: 3px;
    background: #f4f4f4;
}

.category {
    height: 25px;
    line-height: 24px;
}

.listbox {
    flex: 1;
    margin-left: 1px;
    padding: 1px 4px;
    border: 1px solid #828790;
    background: #fff;
    font-family: "Noto Sans", sans-serif;
    font-size: 16px;
    line-height: 22px;
}

.results {
    flex: 1;
    min-width: 0;
    position: relative;
    display: flex;
    flex-direction: column;
}

.results-box {
    flex: 1;
    border: 1px solid #828790;
    background: #fff;
}

.results table {
    border-collapse: collapse;
    table-layout: fixed;
    width: 456px;
}

.results th {
    height: 29px;
    padding: 0 4px;
    border-right: 1px solid #e4e4e4;
    font-weight: normal;
    text-align: left;
}

.results td {
    height: 22px;
    padding: 0 3px;
    background: #0078d7;
    color: #fff;
    font-family: "Noto Sans", sans-serif;
    font-size: 16px;
    line-height: 20px;
    white-space: nowrap;
}

.results .focused {
    outline: 1px dotted #ff9a3c;
    outline-offset: -1px;
}

.col-device {
    width: 109px;
}

.col-library {
    width: 112px;
}

.col-description {
    width: 235px;
}

.snapeda {
    height: 28px;
    display: flex;
    align-items: center;
    justify-content: center;
    gap: 20px;
    margin: 19px 12px 11px;
    padding-right: 8px;
    border: 1px solid #d0d0d0;
    border-radius: 4px;
    background: #fdfdfd;
}

.snapeda-logo {
    width: 110px;
    height: 20px;
    display: flex;
    align-items: center;
    justify-content: center;
    border-radius: 4px;
    background: #ff7a1a;
    color: #fff;
    font-family: "Liberation Sans", sans-serif;
    font-size: 13px;
}

.snapeda-logo svg {
    width: 14px;
    height: 18px;
}

.previews {
    width: 333px;
    display: flex;
    flex-direction: column;
}

.preview {
    flex: 1;
    min-height: 0;
    position: relative;
    background: #dfdfcf;
}

.preview span {
    position: absolute;
    left: 5px;
    top: 4px;
    font-family: "Liberation Sans", sans-serif;
    font-size: 11px;
    line-height: 16px;
}

.preview svg {
    width: 100%;
    height: 100%;
    display: block;
}

.pcb {
    background: #000;
}

.pcb text {
    fill: #fff;
    font-family: "Liberation Sans", sans-serif;
    font-size: 28px;
}

.package {
    position: relative;
    margin-top: 7px;
}

.package select {
    appearance: none;
    display: block;
    width: 100%;
    height: 21px;
    padding: 2px 0 0 3px;
    border: 1px solid #ccc;
    border-radius: 3px;
    background: #fdfdfd;
}

.package::after {
    content: "";
    position: absolute;
    right: 6px;
    top: 8px;
    border: 4px solid transparent;
    border-top-color: #000;
    border-bottom: 0;
}

.actions {
    display: flex;
    gap: 9px;
    padding: 8px 1px 1px;
}

.actions button {
    width: 91px;
    height: 27px;
    padding-bottom: 2px;
    border: 1px solid #d0d0d0;
    border-radius: 4px;
    background: #fdfdfd;
    font-size: 14px;
}

.actions .gear {
    width: 31px;
    margin-right: auto;
}

.actions .gear svg {
    width: 20px;
    height: 20px;
    display: block;
    margin: 0 auto;
}

.actions .ok {
    border-color: #0078d7;
}

.resize {
    position: absolute;
    right: 3px;
    bottom: 2px;
    width: 10px;
    height: 11px;
}

/* Red marker frames */
.mark {
    position: absolute;
    border: 2px solid #ed1c24;
    pointer-events: none;
}

.mark-keywords {
    left: -17px;
    top: 20px;
    width: 101px;
    height: 36px;
}

.mark-result {
    left: -17px;
    top: 56px;
    width: 528px;
    height: 29px;
}
```
